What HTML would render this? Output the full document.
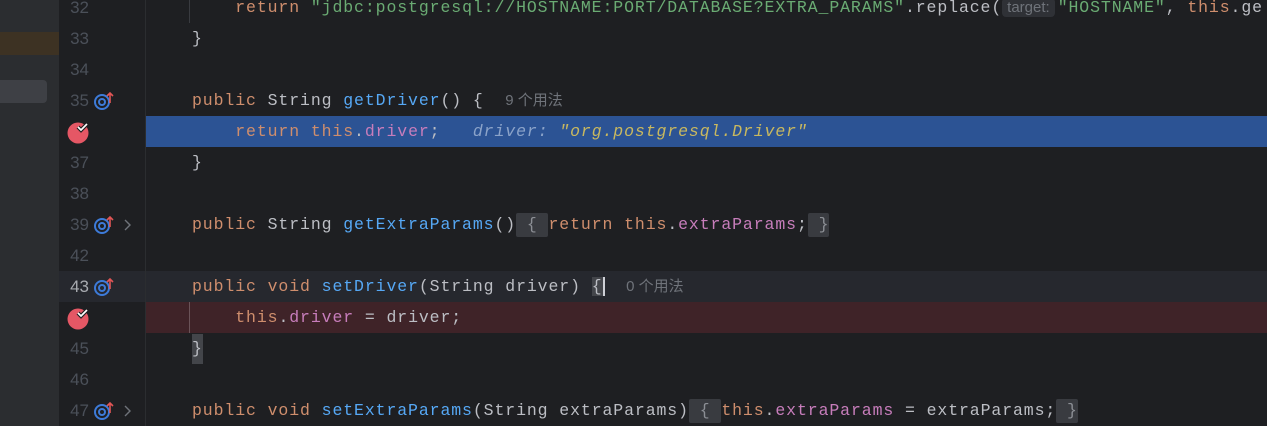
<!DOCTYPE html>
<html><head><meta charset="utf-8"><style>
*{margin:0;padding:0;box-sizing:border-box}
body{width:1267px;height:426px;overflow:hidden;background:#1e1f22;position:relative;font-family:"Liberation Mono",monospace;}
.panel{position:absolute;left:0;top:0;width:59px;height:426px;background:#2b2d30}
.row{position:absolute;left:0;width:1267px;height:31px}
.ln{position:absolute;left:59px;width:30px;text-align:right;top:0;line-height:31px;font-size:17px;color:#4b5059;font-family:"Liberation Sans",sans-serif}
.code{position:absolute;left:192px;top:0;line-height:31px;font-size:16.5px;letter-spacing:0.9px;color:#bcbec4;white-space:pre}
.k{color:#cf8e6d}.s{color:#6aab73}.m{color:#56a8f5}.f{color:#c77dbb}
.h{font-family:"Liberation Sans","Noto Sans CJK SC",sans-serif;font-size:15px;color:#6f737a;letter-spacing:0}
.fold{background:#393b40;color:#8c8f95;display:inline-block;height:24px;line-height:24px;vertical-align:middle;border-radius:2px}
.ov{position:absolute;left:93px;top:6px}
.bp{position:absolute;left:67px;top:4px}
.chev{position:absolute;left:122px;top:9px}
</style></head><body>
<div class="panel"></div>
<div style="position:absolute;left:0;top:32px;width:59px;height:23px;background:#3d3223"></div>
<div style="position:absolute;left:0;top:80px;width:47px;height:23px;background:#3e4045;border-radius:0 4px 4px 0"></div>
<div style="position:absolute;left:145px;top:0;width:1px;height:426px;background:#2b2d30"></div>

<div class="row" style="top:-8px"><div class="ln">32</div><div class="code">    <span class="k">return</span> <span class="s">"jdbc:postgresql://HOSTNAME:PORT/DATABASE?EXTRA_PARAMS"</span>.replace(<span class="h" style="background:#2f3136;border-radius:4px;padding:1px 5px;margin-right:3px">target:</span><span class="s">"HOSTNAME"</span>, <span class="k">this</span>.ge</div></div>
<div style="position:absolute;left:189px;top:0;width:1px;height:23px;background:#393b40"></div>
<div class="row" style="top:23px"><div class="ln">33</div><div class="code">}</div></div>
<div class="row" style="top:54px"><div class="ln">34</div></div>
<div class="row" style="top:85px"><div class="ln">35</div><svg class="ov" width="22" height="20"><circle cx="9" cy="11" r="7" fill="none" stroke="#3d7bd9" stroke-width="2"/><circle cx="9" cy="11" r="3" fill="none" stroke="#3d7bd9" stroke-width="2"/><path d="M17 12V2M14 5l3-3 3 3" stroke="#e05555" stroke-width="1.6" fill="none"/></svg><div class="code"><span class="k">public</span> String <span class="m">getDriver</span>() {  <span class="h">9 个用法</span></div></div>
<div class="row" style="top:116px"><div style="position:absolute;left:146px;top:0;width:1121px;height:31px;background:#2c5394"></div><svg class="bp" width="24" height="24"><circle cx="11" cy="13" r="10.5" fill="#e55765"/><path d="M11 7l3 3 6-6" stroke="#1e1f22" stroke-width="4" fill="none"/><path d="M11 7l3 3 6-6" stroke="#fff" stroke-width="1.7" fill="none"/></svg><div class="code">    <span class="k">return this</span>.<span class="f">driver</span>;  <i style="color:#8ba3c9"> driver: </i><i style="color:#c9b85f">"org.postgresql.Driver"</i></div></div>
<div class="row" style="top:147px"><div class="ln">37</div><div class="code">}</div></div>
<div class="row" style="top:178px"><div class="ln">38</div></div>
<div class="row" style="top:209px"><div class="ln">39</div><svg class="ov" width="22" height="20"><circle cx="9" cy="11" r="7" fill="none" stroke="#3d7bd9" stroke-width="2"/><circle cx="9" cy="11" r="3" fill="none" stroke="#3d7bd9" stroke-width="2"/><path d="M17 12V2M14 5l3-3 3 3" stroke="#e05555" stroke-width="1.6" fill="none"/></svg><svg class="chev" width="10" height="14"><path d="M3 2l5 5-5 5" stroke="#6f737a" stroke-width="1.4" fill="none"/></svg><div class="code"><span class="k">public</span> String <span class="m">getExtraParams</span>()<span class="fold"> { </span><span class="k">return this</span>.<span class="f">extraParams</span>;<span class="fold"> }</span></div></div>
<div class="row" style="top:240px"><div class="ln">42</div></div>
<div class="row" style="top:271px;left:59px;width:1208px;background:#26282e"></div>
<div class="row" style="top:271px"><div style="position:absolute;left:145px;top:0;width:1px;height:31px;background:#2b2d30"></div><div class="ln" style="color:#a8abb0">43</div><svg class="ov" width="22" height="20"><circle cx="9" cy="11" r="7" fill="none" stroke="#3d7bd9" stroke-width="2"/><circle cx="9" cy="11" r="3" fill="none" stroke="#3d7bd9" stroke-width="2"/><path d="M17 12V2M14 5l3-3 3 3" stroke="#e05555" stroke-width="1.6" fill="none"/></svg><div class="code"><span class="k">public void</span> <span class="m">setDriver</span>(String driver) <span style="background:#43454a;border-right:2px solid #ced0d6">{</span>  <span class="h">0 个用法</span></div></div>
<div class="row" style="top:302px"><div style="position:absolute;left:146px;top:0;width:1121px;height:31px;background:#3f2328"></div><div style="position:absolute;left:189px;top:0;width:1px;height:31px;background:#6a5358"></div><svg class="bp" width="24" height="24"><circle cx="11" cy="13" r="10.5" fill="#e55765"/><path d="M11 7l3 3 6-6" stroke="#1e1f22" stroke-width="4" fill="none"/><path d="M11 7l3 3 6-6" stroke="#fff" stroke-width="1.7" fill="none"/></svg><div class="code">    <span class="k">this</span>.<span class="f">driver</span> = driver;</div></div>
<div class="row" style="top:333px"><div class="ln">45</div><div class="code"><span style="background:#43454a;display:inline-block;line-height:30px">}</span></div></div>
<div class="row" style="top:364px"><div class="ln">46</div></div>
<div class="row" style="top:395px"><div class="ln">47</div><svg class="ov" width="22" height="20"><circle cx="9" cy="11" r="7" fill="none" stroke="#3d7bd9" stroke-width="2"/><circle cx="9" cy="11" r="3" fill="none" stroke="#3d7bd9" stroke-width="2"/><path d="M17 12V2M14 5l3-3 3 3" stroke="#e05555" stroke-width="1.6" fill="none"/></svg><svg class="chev" width="10" height="14"><path d="M3 2l5 5-5 5" stroke="#6f737a" stroke-width="1.4" fill="none"/></svg><div class="code"><span class="k">public void</span> <span class="m">setExtraParams</span>(String extraParams)<span class="fold"> { </span><span class="k">this</span>.<span class="f">extraParams</span> = extraParams;<span class="fold"> }</span></div></div>
</body></html>
